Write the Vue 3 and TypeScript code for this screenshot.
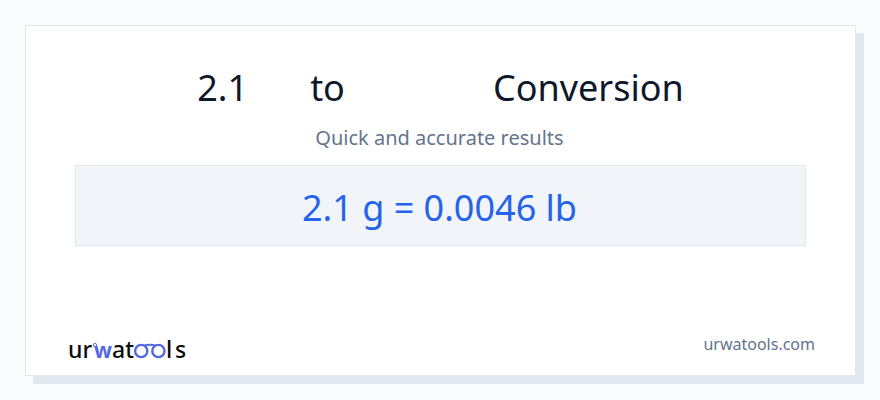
<script setup lang="ts">
interface Conversion {
  amount: string
  from: string
  result: string
  to: string
}

const conversion: Conversion = { amount: '2.1', from: 'g', result: '0.0046', to: 'lb' }
</script>

<template>
  <main class="page">
    <article class="card">
      <h1 class="title">
        <span>{{ conversion.amount }}</span>
        <span class="to">to</span>
        <span class="kind">Conversion</span>
      </h1>
      <p class="subtitle">Quick and accurate results</p>
      <p class="result">
        {{ conversion.amount }} {{ conversion.from }} = {{ conversion.result }} {{ conversion.to }}
      </p>
      <footer class="footer">
        <svg class="logo" viewBox="0 0 120 30" role="img" aria-label="urwatools">
          <g class="letters">
            <text x="0" y="25">ur</text>
            <text x="44" y="25">at</text>
            <text x="98" y="25">l</text>
            <text x="107" y="25">s</text>
          </g>
          <text class="accent" x="26" y="25">w</text>
          <g class="rings">
            <circle cx="27" cy="12" r="1.6" stroke-width="1" />
            <circle cx="73.2" cy="18" r="6.1" stroke-width="2.4" />
            <circle cx="90.4" cy="18" r="6.1" stroke-width="2.4" />
            <path d="M76 12.6Q81.8 11 87.600 12.6" stroke-width="2" />
          </g>
        </svg>
        <a class="site" href="https://urwatools.com">urwatools.com</a>
      </footer>
    </article>
  </main>
</template>

<style>
body {
  margin: 0;
  background: #fafbfd;
}
</style>

<style scoped>
.page {
  box-sizing: border-box;
  min-height: 100vh;
  padding: 25px 24px 24px 25px;
  display: flex;
  font-family: "Noto Sans", sans-serif;
  color: #64748b;
}

.card {
  box-sizing: border-box;
  flex: 1;
  display: flex;
  flex-direction: column;
  padding: 37px 40px 12px;
  background: #ffffff;
  border: 1px solid #e2e8f0;
  box-shadow: 8px 8px 0 #e2e8f0;
}

.title {
  margin: 0;
  display: flex;
  justify-content: center;
  font-size: 36px;
  line-height: 49px;
  font-weight: 400;
  color: #0f172a;
}

.to {
  margin-left: 62px;
}

.kind {
  margin-left: 148px;
}

.subtitle {
  margin: 12px 2px 13px 0;
  text-align: center;
  font-size: 20px;
  line-height: 28px;
}

.result {
  margin: 0 9px;
  padding: 17px 2px 13px 0;
  background: #f1f5f9;
  border: 1px solid #e2e8f0;
  text-align: center;
  font-size: 36px;
  line-height: 49px;
  color: #2563eb;
}

.footer {
  margin-top: auto;
  display: flex;
  justify-content: space-between;
  align-items: flex-start;
}

.logo {
  width: 120px;
  height: 30px;
  margin: 0 2px;
  font-size: 23px;
  overflow: visible;
}

.letters {
  fill: #0b0b0b;
  font-weight: 500;
}

.accent {
  fill: #5468e7;
  font-weight: 700;
  font-size: 21px;
}

.rings {
  fill: none;
  stroke: #5468e7;
}

.site {
  color: #64748b;
  font-size: 16px;
  line-height: 22px;
  text-decoration: none;
}
</style>
